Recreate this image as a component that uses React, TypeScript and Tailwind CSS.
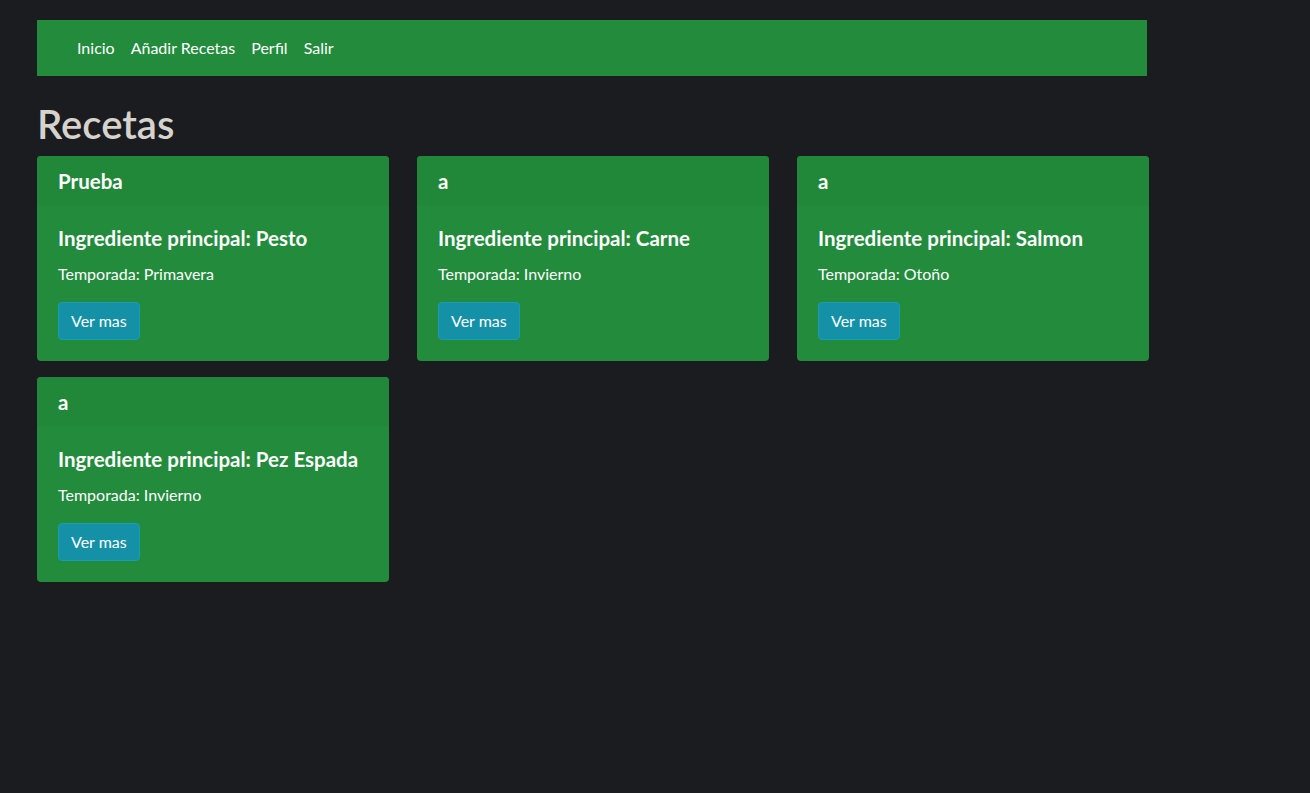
import React from 'react';

type Receta = { titulo: string; ingrediente: string; temporada: string };

const recetas: Receta[] = [
  { titulo: 'Prueba', ingrediente: 'Pesto', temporada: 'Primavera' },
  { titulo: 'a', ingrediente: 'Carne', temporada: 'Invierno' },
  { titulo: 'a', ingrediente: 'Salmon', temporada: 'Otoño' },
  { titulo: 'a', ingrediente: 'Pez Espada', temporada: 'Invierno' },
];

const links = ['Inicio', 'Añadir Recetas', 'Perfil', 'Salir'];

const RecetaCard: React.FC<{ receta: Receta }> = ({ receta }) => (
  <div className="flex flex-col rounded-[4px] bg-[#228b3c] text-white">
    <div className="border-b border-[#238a3d] bg-[#21883a] px-[21px] pt-[13px] pb-[12px] rounded-t-[4px]">
      <h5 className="text-[20.5px] font-bold leading-[24px]">{receta.titulo}</h5>
    </div>
    <div className="px-[21px] pt-[20px] pb-[21px]">
      <h5 className="mb-[12px] whitespace-nowrap text-[20.5px] font-bold leading-[24px]">
        Ingrediente principal: {receta.ingrediente}
      </h5>
      <p className="mb-[16px] text-[16px] leading-[24px]">Temporada: {receta.temporada}</p>
      <button className="h-[38px] rounded-[4px] border border-[#1a9cb2] bg-[#1591a7] px-[12px] text-[16px] leading-[24px] text-white">
        Ver mas
      </button>
    </div>
  </div>
);

export default function App() {
  return (
    <div
      className="min-h-[793px] bg-[#1b1c1f] pt-[20px] pl-[37px]"
      style={{ fontFamily: 'Lato, "Noto Sans", sans-serif' }}
    >
      <nav className="flex h-[56px] w-[1110px] items-center gap-[16px] bg-[#228b3c] pl-[40px]">
        {links.map((l) => (
          <a key={l} className="text-[16px] leading-[24px] text-white">
            {l}
          </a>
        ))}
      </nav>

      <h1 className="mt-[24px] mb-[8px] text-[40px] font-semibold leading-[48px] text-[#d6d3cd]">
        Recetas
      </h1>

      <div className="grid grid-cols-[352px_352px_352px] gap-x-[28px] gap-y-[16px]">
        {recetas.map((r, i) => (
          <RecetaCard key={i} receta={r} />
        ))}
      </div>
    </div>
  );
}
